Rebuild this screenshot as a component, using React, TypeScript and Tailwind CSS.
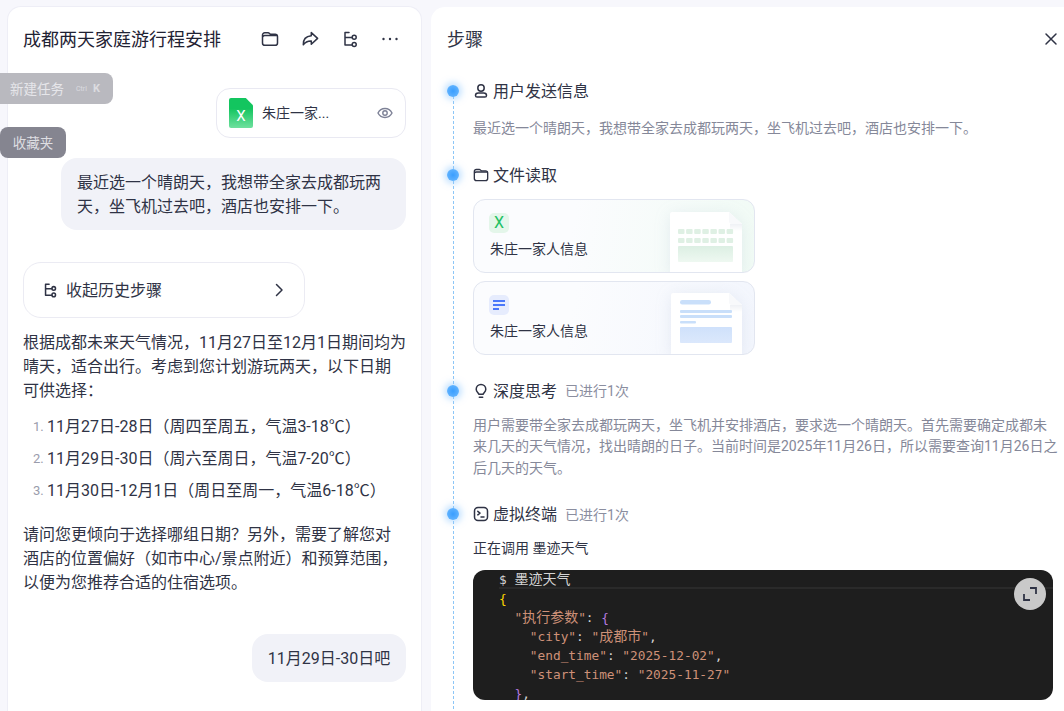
import React from "react";

const ic = { fill: "none", stroke: "#2f3345", strokeWidth: 1.5, strokeLinecap: "round" as const, strokeLinejoin: "round" as const };

function FolderIcon({ size = 18 }: { size?: number }) {
  return (
    <svg width={size} height={size} viewBox="0 0 18 18" {...ic}>
      <path d="M1.500 5a2.200 2.200 0 0 1 2.200-2.200h3.400c.6 0 1 .3 1.400.7l.8.8h4.900a2.200 2.200 0 0 1 2.300 2.200v6.400a2.400 2.400 0 0 1-2.400 2.400H3.900a2.400 2.400 0 0 1-2.400-2.400z" />
      <path d="M1.800 6.600c.5-.7 1.200-1 2-1h12.400" />
    </svg>
  );
}
function ShareIcon() {
  return (
    <svg width="18" height="18" viewBox="0 0 18 18" {...ic}>
      <path d="M10.300 2.600 16.600 8.400l-6.300 5.800v-3.300c-3.500-.1-6 .9-8 3.900-.2-4.900 2.600-8.500 8-9z" />
    </svg>
  );
}
function FlowIcon({ size = 18, sw = 1.5 }: { size?: number; sw?: number }) {
  return (
    <svg width={size} height={size} viewBox="0 0 18 18" {...ic} strokeWidth={sw}>
      <path d="M4 2.500V15h7M4 2.500h4M4 7.500h7" />
      <circle cx="13.200" cy="7.200" r="2" />
      <circle cx="13.200" cy="14.500" r="2" />
    </svg>
  );
}
function PersonIcon() {
  return (
    <svg width="16" height="16" viewBox="0 0 16 16" {...ic}>
      <circle cx="8" cy="5" r="3.200" />
      <path d="M2.500 12.400c0-1.500 1.200-2.400 2.800-2.400h5.400c1.600 0 2.800.9 2.800 2.400 0 1-.6 1.600-1.600 1.600H4.100c-1 0-1.600-.6-1.600-1.600z" />
    </svg>
  );
}
function BulbIcon() {
  return (
    <svg width="16" height="16" viewBox="0 0 16 16" {...ic}>
      <path d="M5.800 11.200c0-1.200-2.600-2.300-2.600-5A4.800 4.800 0 0 1 8 1.500a4.800 4.800 0 0 1 4.800 4.700c0 2.700-2.600 3.800-2.600 5z" />
      <path d="M6.300 14.300h3.400" />
    </svg>
  );
}
function TermIcon() {
  return (
    <svg width="16" height="16" viewBox="0 0 16 16" {...ic}>
      <rect x="1.500" y="1.500" width="13" height="13" rx="3.500" />
      <path d="m4.800 5.300 2.200 1.800-2.200 1.800M8 11h3" />
    </svg>
  );
}
function Dot() {
  return (
    <span className="absolute left-[-26px] top-[6px] size-[12px] rounded-full bg-[radial-gradient(circle,#3a9eff_0%,#5fb2ff_70%,#8cc8ff_100%)] shadow-[0_0_6px_3px_rgba(140,200,255,0.5)]" />
  );
}
function Step({ icon, title, note, children }: { icon: React.ReactNode; title: string; note?: string; children?: React.ReactNode }) {
  return (
    <div className="relative mb-[24px]">
      <Dot />
      <div className="flex h-[24px] items-center text-[16px] text-[#2f3345]">
        <span className="mr-[4px] flex w-[16px] items-center">{icon}</span>
        <span className="pt-[2px]">{title}</span>
        {note && <span className="ml-[8px] pt-[2px] text-[14px] text-[#8b8e9f]">{note}</span>}
      </div>
      {children}
    </div>
  );
}
function DocArt({ kind }: { kind: "x" | "d" }) {
  const cells = [0, 1, 2, 3, 4, 5, 6];
  return (
    <svg
      width="90"
      height="64"
      viewBox="0 0 90 64"
      className={`absolute right-0 ${kind === "x" ? "top-[11px]" : "top-[10px]"} drop-shadow-[0_2px_8px_rgba(120,140,180,0.14)]`}
    >
      <defs>
        <linearGradient id={"fold" + kind} x1="0" y1="0" x2="0" y2="1">
          <stop offset="0" stopColor="#eff1f5" />
          <stop offset="1" stopColor="#ffffff" />
        </linearGradient>
        <linearGradient id={"body" + kind} x1="0" y1="0" x2="0" y2="1">
          <stop offset="0" stopColor={kind === "x" ? "#dcefe3" : "#cfe1fb"} />
          <stop offset="1" stopColor={kind === "x" ? "#eef8f1" : "#dbe8fc"} />
        </linearGradient>
      </defs>
      <path d={kind === "x" ? "M6 3a2 2 0 0 1 2-2h57l13 12v56H6z" : "M7 3a2 2 0 0 1 2-2h56l13 12v56H7z"} fill="#ffffff" />
      <rect x="66" y="13" width="12" height="7" fill={`url(#fold${kind})`} />
      <path d="M65 1v9a3 3 0 0 0 3 3h10z" fill="#f8f9fb" />
      {kind === "x" ? (
        <g fill="#dff0e4">
          {cells.map((i) => (
            <rect key={"a" + i} x={14 + i * 8.1} y="18" width="6.500" height="5" rx="1" />
          ))}
          {cells.map((i) => (
            <rect key={"b" + i} x={14 + i * 8.1} y="27" width="6.500" height="5" rx="1" />
          ))}
          <rect x="14" y="35" width="55" height="16" rx="1" fill="url(#bodyx)" />
        </g>
      ) : (
        <g fill="#c9dffa">
          <rect x="16" y="8" width="31" height="4.500" rx="2.200" />
          <rect x="16" y="18" width="52" height="3" rx="1" />
          <rect x="16" y="23" width="52" height="3" rx="1" />
          <rect x="16" y="29" width="16" height="2.500" rx="1" />
          <rect x="16" y="35" width="52" height="16" rx="1" fill="url(#bodyd)" />
        </g>
      )}
    </svg>
  );
}
function FileCard({ kind }: { kind: "x" | "d" }) {
  const bg =
    kind === "x"
      ? "bg-[linear-gradient(100deg,#fbfcfe_35%,#f1fbf5_100%)]"
      : "bg-[linear-gradient(100deg,#fbfcfe_35%,#f3f6fd_100%)]";
  return (
    <div className={`relative h-[74px] w-[282px] overflow-hidden rounded-[12px] border border-[#e2e6f0] pl-[15px] pt-[13px] ${bg}`}>
      {kind === "x" ? (
        <div className="flex size-[20px] items-center justify-center rounded-[5px] bg-[#e4f6ea] text-[16px] leading-none text-[#22c063]">X</div>
      ) : (
        <div className="flex size-[20px] flex-col justify-center gap-[2px] rounded-[5px] bg-[#e6ecfd] pl-[4px]">
          <span className="h-[2px] w-[12px] bg-[#4a78fa]" />
          <span className="h-[2px] w-[12px] bg-[#4a78fa]" />
          <span className="h-[2px] w-[6px] bg-[#4a78fa]" />
        </div>
      )}
      <div className="mt-[6px] pl-[1px] text-[14px] leading-[21px] text-[#2f3345]">朱庄一家人信息</div>
      <DocArt kind={kind} />
    </div>
  );
}

const S = "text-[#ce9178]";
const P = "text-[#d4d4d4]";
const C = "text-[14px]";

export default function App() {
  return (
    <div className="relative flex h-[711px] w-[1064px] overflow-hidden bg-[#f7f7fc] font-['Roboto','Noto_Sans_CJK_SC',sans-serif] text-[#2f3345]">
      {/* left panel */}
      <div className="ml-[7px] mt-[6px] flex w-[415px] shrink-0 flex-col rounded-t-[14px] border border-b-0 border-[#eeeef6] bg-white pl-[15px] pr-[15px]">
        <div className="flex h-[64px] shrink-0 items-center justify-between">
          <h1 className="text-[18px] font-normal text-[#1f2233]">成都两天家庭游行程安排</h1>
          <div className="flex items-center gap-[22px] pr-[7px]">
            <FolderIcon />
            <ShareIcon />
            <FlowIcon />
            <svg width="18" height="18" viewBox="0 0 18 18" fill="#2f3345">
              <circle cx="2.500" cy="9" r="1.200" />
              <circle cx="9" cy="9" r="1.200" />
              <circle cx="15.500" cy="9" r="1.200" />
            </svg>
          </div>
        </div>
        <div className="mt-[17px] flex justify-end">
          <div className="flex h-[50px] w-[190px] items-center rounded-[14px] border border-[#e9e9f2] bg-white pl-[12px] pr-[12px]">
            <div className="relative flex h-[30px] w-[24px] items-end justify-center rounded-[2px] bg-[linear-gradient(180deg,#13c55f_35%,#6fe09e_100%)] [clip-path:polygon(0_0,70%_0,100%_24%,100%_100%,0_100%)]">
              <span className="mb-[2px] text-[15px] leading-[20px] text-white">X</span>
            </div>
            <span className="ml-[9px] flex-1 text-[14px] text-[#2f3345]">朱庄一家...</span>
            <svg width="16" height="16" viewBox="0 0 16 16" fill="none" stroke="#7d8196" strokeWidth="1.400">
              <path d="M1 8c1.500-3 4-4.500 7-4.500S13.500 5 15 8c-1.500 3-4 4.500-7 4.500S2.500 11 1 8z" />
              <circle cx="8" cy="8" r="2.200" />
            </svg>
          </div>
        </div>
        <div className="mt-[20px] flex justify-end">
          <div className="w-[345px] rounded-[16px] bg-[#f1f2f8] px-[16px] pb-[11px] pt-[13px] text-[16px] leading-[24px]">
            最近选一个晴朗天，我想带全家去成都玩两天，坐飞机过去吧，酒店也安排一下。
          </div>
        </div>
        <div className="mt-[32px] flex h-[56px] w-[282px] items-center rounded-[18px] border border-[#ebebf3] pl-[18px] pr-[17px] text-[16px]">
          <FlowIcon size={16} sw={1.7} />
          <span className="ml-[8px] flex-1 pt-[2px]">收起历史步骤</span>
          <svg width="16" height="16" viewBox="0 0 16 16" fill="none" stroke="#2f3345" strokeWidth="1.500" strokeLinecap="round" strokeLinejoin="round">
            <path d="m5.500 2.500 5.500 5.500-5.500 5.500" />
          </svg>
        </div>
        <p className="mt-[13px] text-[16px] leading-[24px]">
          根据成都未来天气情况，11月27日至12月1日期间均为晴天，适合出行。考虑到您计划游玩两天，以下日期可供选择：
        </p>
        <ol className="mt-[8px] flex flex-col text-[16px] leading-[32px]">
          {[
            "11月27日-28日（周四至周五，气温3-18℃）",
            "11月29日-30日（周六至周日，气温7-20℃）",
            "11月30日-12月1日（周日至周一，气温6-18℃）",
          ].map((t, i) => (
            <li key={t} className="flex">
              <span className="w-[24px] pl-[10px] text-[13px] text-[#9a9cac]">{i + 1}.</span>
              <span>{t}</span>
            </li>
          ))}
        </ol>
        <p className="mt-[16px] text-[16px] leading-[24px]">
          请问您更倾向于选择哪组日期？另外，需要了解您对酒店的位置偏好（如市中心/景点附近）和预算范围，以便为您推荐合适的住宿选项。
        </p>
        <div className="mt-[39px] flex justify-end">
          <div className="flex h-[48px] w-[154px] items-center justify-center rounded-[16px] bg-[#f1f2f8] pt-[2px] text-[16px]">11月29日-30日吧</div>
        </div>
      </div>

      {/* right panel */}
      <div className="ml-[9px] mt-[7px] flex min-w-0 flex-1 flex-col rounded-tl-[14px] bg-white pl-[16px] pr-[11px]">
        <div className="flex h-[64px] shrink-0 items-center justify-between">
          <h2 className="text-[18px] font-normal text-[#2f3345]">步骤</h2>
          <svg width="14" height="14" viewBox="0 0 14 14" stroke="#2f3345" strokeWidth="1.500" strokeLinecap="round" className="mr-[-5px]">
            <path d="m2 2 10 10M12 2 2 12" />
          </svg>
        </div>
        <div className="relative ml-[26px] mt-[8px] flex-1">
          <div className="absolute bottom-0 left-[-20px] top-[12px] w-0 border-l border-dashed border-[#8cc6f7]" />
          <Step icon={<PersonIcon />} title="用户发送信息">
            <p className="-mb-[1px] mt-[15px] text-[14px] leading-[21.5px] text-[#858899]">
              最近选一个晴朗天，我想带全家去成都玩两天，坐飞机过去吧，酒店也安排一下。
            </p>
          </Step>
          <Step icon={<FolderIcon size={16} />} title="文件读取">
            <div className="mt-[12px] flex flex-col gap-[8px]">
              <FileCard kind="x" />
              <FileCard kind="d" />
            </div>
          </Step>
          <Step icon={<BulbIcon />} title="深度思考" note="已进行1次">
            <p className="-mb-[1px] mt-[12px] w-[587px] text-[14px] leading-[21.5px] text-[#858899]">
              用户需要带全家去成都玩两天，坐飞机并安排酒店，要求选一个晴朗天。首先需要确定成都未来几天的天气情况，找出晴朗的日子。当前时间是2025年11月26日，所以需要查询11月26日之后几天的天气。
            </p>
          </Step>
          <Step icon={<TermIcon />} title="虚拟终端" note="已进行1次">
            <p className="mt-[12px] text-[14px] leading-[20px]">正在调用 墨迹天气</p>
            <div className="relative mt-[12px] h-[130px] overflow-hidden rounded-[12px] bg-[#1e1e1e] font-['DejaVu_Sans_Mono','Noto_Sans_CJK_SC',monospace] text-[12.8px] leading-[19px] whitespace-pre">
              <div className="ml-[26px] h-[19px] border-b-2 border-[#2a2a2a] text-[#d4d4d4]">
                <span>$</span> <span className={C}>墨迹天气</span>
              </div>
              <div className="ml-[26px] text-[#ffd700]">{"{"}</div>
              <div className="ml-[26px]">
                {"  "}
                <span className={S}>"<span className={C}>执行参数</span>"</span>
                <span className={P}>: </span>
                <span className="text-[#b77be0]">{"{"}</span>
              </div>
              <div className="ml-[26px]">
                {"    "}
                <span className={S}>"city"</span>
                <span className={P}>: </span>
                <span className={S}>"<span className={C}>成都市</span>"</span>
                <span className={P}>,</span>
              </div>
              <div className="ml-[26px]">
                {"    "}
                <span className={S}>"end_time"</span>
                <span className={P}>: </span>
                <span className={S}>"2025-12-02"</span>
                <span className={P}>,</span>
              </div>
              <div className="ml-[26px]">
                {"    "}
                <span className={S}>"start_time"</span>
                <span className={P}>: </span>
                <span className={S}>"2025-11-27"</span>
              </div>
              <div className="ml-[26px]">
                {"  "}
                <span className="text-[#b77be0]">{"}"}</span>
                <span className={P}>,</span>
              </div>
              <div className="absolute right-[7px] top-[8px] flex size-[32px] items-center justify-center rounded-full bg-[#c9c9c9]">
                <svg width="18" height="18" viewBox="0 0 18 18" fill="none" stroke="#2f3345" strokeWidth="1.800">
                  <path d="M9 3h6v6M3 9v6h6" />
                </svg>
              </div>
            </div>
          </Step>
        </div>
      </div>

      {/* floating tabs */}
      <div className="absolute left-0 top-[73px] flex h-[31px] w-[113px] items-center rounded-r-[8px] bg-[#b9b9bf] pl-[10px] pt-[2px] text-[13.5px] text-[#e6e6ea]">
        新建任务
        <span className="ml-[12px] text-[7px] text-[#dcdce0]">Ctrl</span>
        <span className="ml-[6px] text-[11px] font-bold text-[#dcdce0]">K</span>
      </div>
      <div className="absolute left-0 top-[127px] flex h-[31px] w-[66px] items-center justify-center rounded-[8px] bg-[#858590] pt-[2px] text-[13.5px] text-[#dedee2]">
        收藏夹
      </div>
    </div>
  );
}
